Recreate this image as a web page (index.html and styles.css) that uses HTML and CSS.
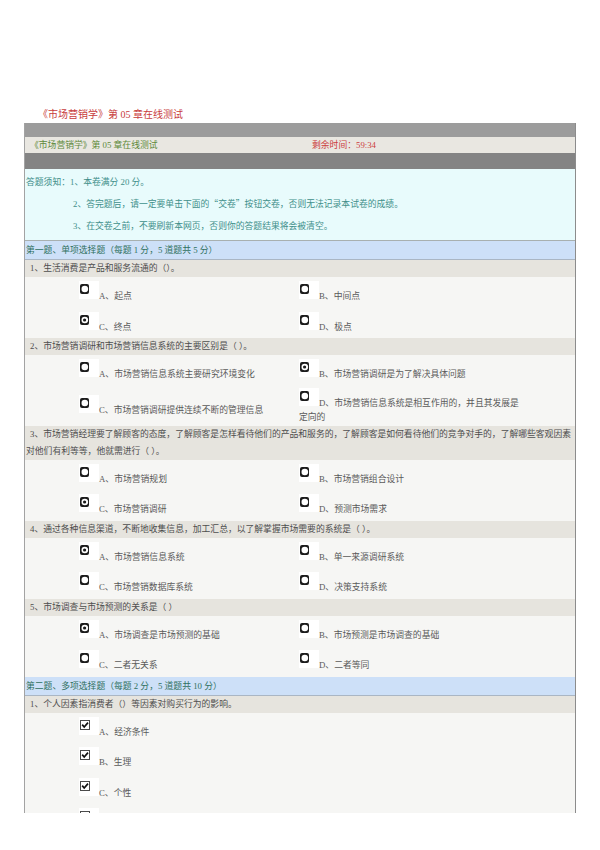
FILE: index.html
```html
<!DOCTYPE html>
<html lang="zh-CN">
<head>
<meta charset="utf-8">
<title>《市场营销学》第05章在线测试</title>
<link rel="stylesheet" href="styles.css">
</head>
<body>
<h1 class="doc-title">《市场营销学》第 05 章在线测试</h1>
<div class="paper">
  <div class="bar-top"></div>
  <div class="head-row"><span class="head-title">《市场营销学》第 05 章在线测试</span><span class="timer">剩余时间：59:34</span></div>
  <div class="bar-dark"></div>
  <div class="notes">
    <div>答题须知：1、本卷满分 20 分。</div>
    <div class="indent">2、答完题后，请一定要单击下面的<span class="cjk">“</span>交卷<span class="cjk">”</span>按钮交卷，否则无法记录本试卷的成绩。</div>
    <div class="indent">3、在交卷之前，不要刷新本网页，否则你的答题结果将会被清空。</div>
  </div>

  <div class="section">第一题、单项选择题（每题 1 分，5 道题共 5 分）</div>

  <div class="q">1、生活消费是产品和服务流通的（）。</div>
  <div class="opts">
    <div class="opt"><span class="ico"><svg class="radio" width="9" height="10" viewBox="0 0 9 10"><rect width="9" height="10" rx="2" fill="#1c1c1c"/><circle cx="4.8" cy="5" r="3.3" fill="#fff"/></svg></span>A、起点</div>
    <div class="opt"><span class="ico"><svg class="radio" width="9" height="10" viewBox="0 0 9 10"><rect width="9" height="10" rx="2" fill="#1c1c1c"/><circle cx="4.8" cy="5" r="3.3" fill="#fff"/></svg></span>B、中间点</div>
    <div class="opt"><span class="ico"><svg class="radio" width="9" height="10" viewBox="0 0 9 10"><rect width="9" height="10" rx="2" fill="#1c1c1c"/><circle cx="4.8" cy="5" r="3.3" fill="#fff"/><circle cx="4.6" cy="5" r="1.6" fill="#1c1c1c"/></svg></span>C、终点</div>
    <div class="opt"><span class="ico"><svg class="radio" width="9" height="10" viewBox="0 0 9 10"><rect width="9" height="10" rx="2" fill="#1c1c1c"/><circle cx="4.8" cy="5" r="3.3" fill="#fff"/></svg></span>D、极点</div>
  </div>

  <div class="q">2、市场营销调研和市场营销信息系统的主要区别是（ ）。</div>
  <div class="opts">
    <div class="opt"><span class="ico"><svg class="radio" width="9" height="10" viewBox="0 0 9 10"><rect width="9" height="10" rx="2" fill="#1c1c1c"/><circle cx="4.8" cy="5" r="3.3" fill="#fff"/></svg></span>A、市场营销信息系统主要研究环境变化</div>
    <div class="opt"><span class="ico"><svg class="radio" width="9" height="10" viewBox="0 0 9 10"><rect width="9" height="10" rx="2" fill="#1c1c1c"/><circle cx="4.8" cy="5" r="3.3" fill="#fff"/><circle cx="4.6" cy="5" r="1.6" fill="#1c1c1c"/></svg></span>B、市场营销调研是为了解决具体问题</div>
    <div class="opt"><span class="ico"><svg class="radio" width="9" height="10" viewBox="0 0 9 10"><rect width="9" height="10" rx="2" fill="#1c1c1c"/><circle cx="4.8" cy="5" r="3.3" fill="#fff"/></svg></span>C、市场营销调研提供连续不断的管理信息</div>
    <div class="opt nowrap"><span class="ico"><svg class="radio" width="9" height="10" viewBox="0 0 9 10"><rect width="9" height="10" rx="2" fill="#1c1c1c"/><circle cx="4.8" cy="5" r="3.3" fill="#fff"/></svg></span>D、市场营销信息系统是相互作用的，并且其发展是<br>定向的</div>
  </div>

  <div class="q">3、市场营销经理要了解顾客的态度，了解顾客是怎样看待他们的产品和服务的，了解顾客是如何看待他们的竞争对手的，了解哪些客观因素<br>对他们有利等等，他就需进行（ ）。</div>
  <div class="opts">
    <div class="opt"><span class="ico"><svg class="radio" width="9" height="10" viewBox="0 0 9 10"><rect width="9" height="10" rx="2" fill="#1c1c1c"/><circle cx="4.8" cy="5" r="3.3" fill="#fff"/></svg></span>A、市场营销规划</div>
    <div class="opt"><span class="ico"><svg class="radio" width="9" height="10" viewBox="0 0 9 10"><rect width="9" height="10" rx="2" fill="#1c1c1c"/><circle cx="4.8" cy="5" r="3.3" fill="#fff"/></svg></span>B、市场营销组合设计</div>
    <div class="opt"><span class="ico"><svg class="radio" width="9" height="10" viewBox="0 0 9 10"><rect width="9" height="10" rx="2" fill="#1c1c1c"/><circle cx="4.8" cy="5" r="3.3" fill="#fff"/><circle cx="4.6" cy="5" r="1.6" fill="#1c1c1c"/></svg></span>C、市场营销调研</div>
    <div class="opt"><span class="ico"><svg class="radio" width="9" height="10" viewBox="0 0 9 10"><rect width="9" height="10" rx="2" fill="#1c1c1c"/><circle cx="4.8" cy="5" r="3.3" fill="#fff"/></svg></span>D、预测市场需求</div>
  </div>

  <div class="q">4、通过各种信息渠道，不断地收集信息，加工汇总，以了解掌握市场需要的系统是（ ）。</div>
  <div class="opts">
    <div class="opt"><span class="ico"><svg class="radio" width="9" height="10" viewBox="0 0 9 10"><rect width="9" height="10" rx="2" fill="#1c1c1c"/><circle cx="4.8" cy="5" r="3.3" fill="#fff"/><circle cx="4.6" cy="5" r="1.6" fill="#1c1c1c"/></svg></span>A、市场营销信息系统</div>
    <div class="opt"><span class="ico"><svg class="radio" width="9" height="10" viewBox="0 0 9 10"><rect width="9" height="10" rx="2" fill="#1c1c1c"/><circle cx="4.8" cy="5" r="3.3" fill="#fff"/></svg></span>B、单一来源调研系统</div>
    <div class="opt"><span class="ico"><svg class="radio" width="9" height="10" viewBox="0 0 9 10"><rect width="9" height="10" rx="2" fill="#1c1c1c"/><circle cx="4.8" cy="5" r="3.3" fill="#fff"/></svg></span>C、市场营销数据库系统</div>
    <div class="opt"><span class="ico"><svg class="radio" width="9" height="10" viewBox="0 0 9 10"><rect width="9" height="10" rx="2" fill="#1c1c1c"/><circle cx="4.8" cy="5" r="3.3" fill="#fff"/></svg></span>D、决策支持系统</div>
  </div>

  <div class="q">5、市场调查与市场预测的关系是（ ）</div>
  <div class="opts">
    <div class="opt"><span class="ico"><svg class="radio" width="9" height="10" viewBox="0 0 9 10"><rect width="9" height="10" rx="2" fill="#1c1c1c"/><circle cx="4.8" cy="5" r="3.3" fill="#fff"/><circle cx="4.6" cy="5" r="1.6" fill="#1c1c1c"/></svg></span>A、市场调查是市场预测的基础</div>
    <div class="opt"><span class="ico"><svg class="radio" width="9" height="10" viewBox="0 0 9 10"><rect width="9" height="10" rx="2" fill="#1c1c1c"/><circle cx="4.8" cy="5" r="3.3" fill="#fff"/></svg></span>B、市场预测是市场调查的基础</div>
    <div class="opt"><span class="ico"><svg class="radio" width="9" height="10" viewBox="0 0 9 10"><rect width="9" height="10" rx="2" fill="#1c1c1c"/><circle cx="4.8" cy="5" r="3.3" fill="#fff"/></svg></span>C、二者无关系</div>
    <div class="opt"><span class="ico"><svg class="radio" width="9" height="10" viewBox="0 0 9 10"><rect width="9" height="10" rx="2" fill="#1c1c1c"/><circle cx="4.8" cy="5" r="3.3" fill="#fff"/></svg></span>D、二者等同</div>
  </div>

  <div class="section">第二题、多项选择题（每题 2 分，5 道题共 10 分）</div>

  <div class="q">1、个人因素指消费者（）等因素对购买行为的影响。</div>
  <div class="opts single">
    <div class="opt"><span class="ico"><svg class="check" width="10" height="10" viewBox="0 0 10 10"><rect x="0.5" y="0.5" width="9" height="9" fill="#fff" stroke="#4a4a4a"/><path d="M2.2 4.6 L4.2 7 L8 2.6" fill="none" stroke="#111" stroke-width="1.7"/></svg></span>A、经济条件</div>
    <div class="opt"><span class="ico"><svg class="check" width="10" height="10" viewBox="0 0 10 10"><rect x="0.5" y="0.5" width="9" height="9" fill="#fff" stroke="#4a4a4a"/><path d="M2.2 4.6 L4.2 7 L8 2.6" fill="none" stroke="#111" stroke-width="1.7"/></svg></span>B、生理</div>
    <div class="opt"><span class="ico"><svg class="check" width="10" height="10" viewBox="0 0 10 10"><rect x="0.5" y="0.5" width="9" height="9" fill="#fff" stroke="#4a4a4a"/><path d="M2.2 4.6 L4.2 7 L8 2.6" fill="none" stroke="#111" stroke-width="1.7"/></svg></span>C、个性</div>
    <div class="opt"><span class="ico"><svg class="check" width="10" height="10" viewBox="0 0 10 10"><rect x="0.5" y="0.5" width="9" height="9" fill="#fff" stroke="#4a4a4a"/></svg></span></div>
  </div>
</div>
</body>
</html>
```
FILE: styles.css
```css
html, body {
  margin: 0;
  background: #fff;
}
body {
  font-family: "Liberation Serif", "Noto Sans CJK SC", serif;
  font-size: 8.8px;
  color: #555;
}
.cjk {
  font-family: "Noto Sans CJK SC", sans-serif;
}
.doc-title {
  margin: 108px 0 1px 38px;
  font-size: 10px;
  line-height: 14px;
  font-weight: normal;
  color: #c83c3c;
}
.paper {
  margin-left: 24px;
  width: 550px;
  height: 690px;
  overflow: hidden;
  border-left: 1px solid #a3a3a3;
  border-right: 1px solid #8c8c8c;
  background: #f6f6f4;
}
.bar-top {
  height: 14px;
  background: #9c9c9c;
}
.head-row {
  display: grid;
  grid-template-columns: 282px 1fr;
  height: 16px;
  line-height: 16px;
  background: #e9e7e1;
}
.head-title {
  padding-left: 5px;
  color: #5e8a3a;
}
.timer {
  padding-left: 5px;
  color: #cc3d3d;
}
.bar-dark {
  height: 16px;
  background: #848484;
}
.notes {
  background: #e8fbfc;
  color: #3f8f8a;
  padding: 2px 0 3px 1px;
  line-height: 22px;
  border-bottom: 1px solid #a8b0b0;
}
.notes .indent {
  padding-left: 47px;
}
.section {
  height: 18px;
  line-height: 18px;
  padding-left: 1px;
  background: #cde0f8;
  color: #2f7060;
  border-bottom: 1px solid #aab6c4;
}
.q {
  background: #e6e4de;
  color: #4e4e4e;
  line-height: 17px;
  padding-left: 1px;
  text-indent: 4px;
}
.opts {
  display: grid;
  grid-template-columns: 220px 220px;
  grid-auto-rows: minmax(30.5px, auto);
  align-items: center;
  padding-left: 54px;
  color: #5a5a5a;
}
.opts.single {
  grid-template-columns: 440px;
}
.opt {
  padding: 2px 0;
  line-height: 14px;
}
.opt.nowrap {
  white-space: nowrap;
}
.ico {
  display: inline-block;
  width: 20px;
  height: 18px;
  overflow: hidden;
  background: #fff;
  vertical-align: baseline;
}
.ico .radio {
  display: block;
  margin: 3px 0 0 1px;
}
.ico .check {
  display: block;
  margin: 3px 0 0 1px;
}
```
